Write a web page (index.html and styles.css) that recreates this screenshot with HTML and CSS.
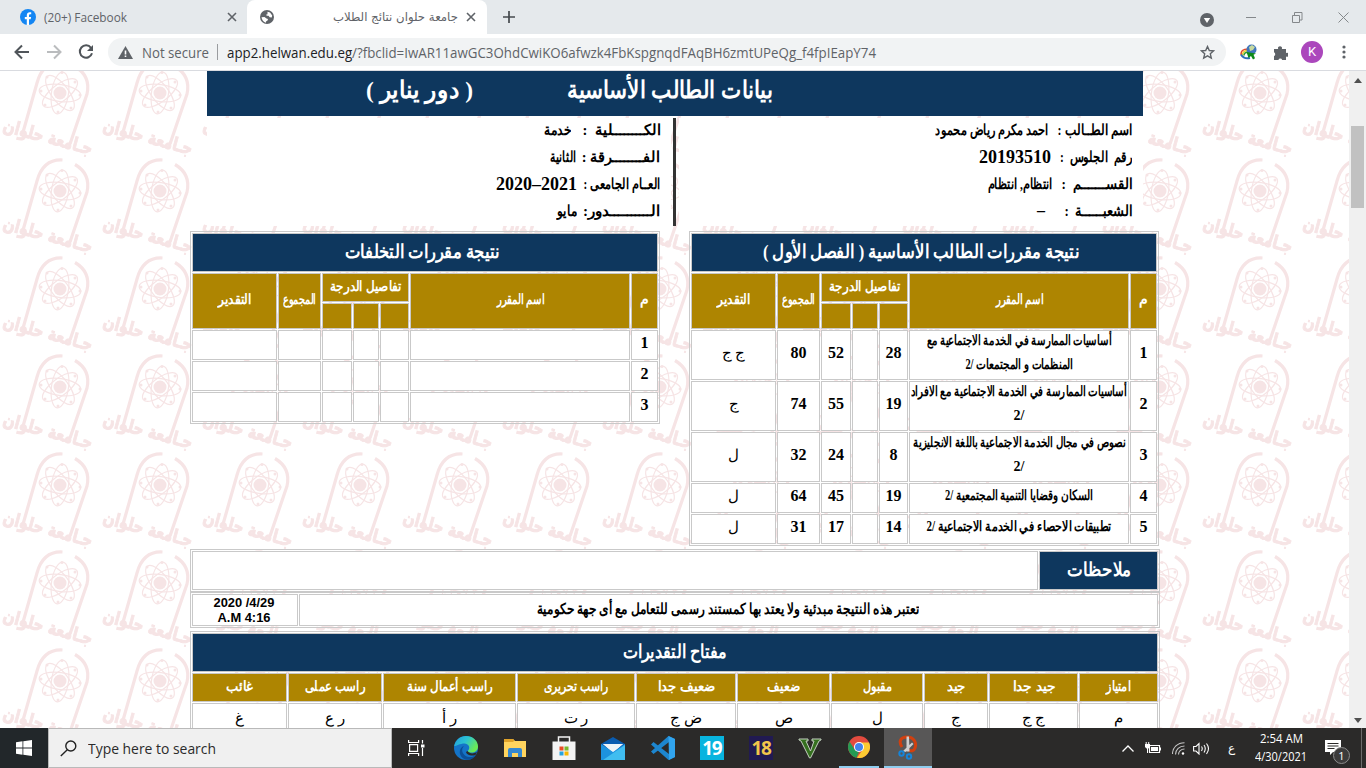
FILE: index.html
```html
<!DOCTYPE html>
<html lang="en">
<head>
<meta charset="utf-8">
<title>جامعة حلوان نتائج الطلاب</title>
<link rel="stylesheet" href="styles.css">
</head>
<body>
<header class="tabs">
  <div class="tab tab-idle">
    <svg width="16" height="16" viewBox="0 0 16 16"><circle cx="8" cy="8" r="8" fill="#1486f3"/><path d="M6.8 16V10.300H4.800V8H6.800V6.300C6.800 4.200 8 3.200 9.700 3.200c.7 0 1.300.1 1.500.1v1.900h-1C9.200 5.200 9 5.800 9 6.500V8h2.100l-.4 2.300H9V16z" fill="#fff"/></svg>
    <span class="fit" data-w="83"><span>(20+) Facebook</span></span>
    <svg class="tab-x" width="10" height="10" viewBox="0 0 10 10"><path d="M1 1l8 8M9 1L1 9" stroke="#5f6368" stroke-width="1.600"/></svg>
  </div>
  <div class="tab tab-live">
    <svg width="14" height="14" viewBox="0 0 14 14"><circle cx="7" cy="7" r="7" fill="#5f6368"/><path d="M1.500 7.200l3-.2 2 1.500 1.500.5-.5 1.500-1.500 1v1.200C3.500 12 1.800 9.800 1.500 7.200zM7.500 1.800l2.500.7 2.200 3-.5 2-2-.3-1.200-1.400H6.800L6 4.800l1.500-.6z" fill="#fff"/></svg>
    <span class="fit tab-name" data-w="125" dir="rtl"><span>جامعة حلوان نتائج الطلاب</span></span>
    <svg width="10" height="10" viewBox="0 0 10 10"><path d="M1 1l8 8M9 1L1 9" stroke="#5f6368" stroke-width="1.600"/></svg>
  </div>
  <svg class="plus" width="12" height="12" viewBox="0 0 12 12"><path d="M6 0v12M0 6h12" stroke="#45494d" stroke-width="1.700"/></svg>
  <div class="window-buttons">
    <svg width="14" height="14" viewBox="0 0 14 14"><circle cx="7" cy="7" r="7" fill="#5f6368"/><path d="M3.800 5h6.400L7 10z" fill="#fff"/></svg>
    <svg width="11" height="11" viewBox="0 0 11 11"><path d="M0 5.500h10" stroke="#84888b"/></svg>
    <svg width="11" height="11" viewBox="0 0 11 11" fill="none" stroke="#84888b"><path d="M.5 3.500h7v7h-7zM2.500 3.500v-3h7.500v7.500H7.500"/></svg>
    <svg width="11" height="11" viewBox="0 0 11 11"><path d="M.5.5l10 10M10.500.5l-10 10" stroke="#84888b"/></svg>
  </div>
</header>
<nav class="toolbar">
  <svg width="16" height="16" viewBox="0 0 16 16" fill="none" stroke="#50555a" stroke-width="2"><path d="M15 8H2M8 1.500L1.500 8 8 14.500"/></svg>
  <svg width="16" height="16" viewBox="0 0 16 16" fill="none" stroke="#babcbe" stroke-width="2"><path d="M1 8h13M8 1.500L14.500 8 8 14.500"/></svg>
  <svg width="16" height="16" viewBox="0 0 16 16"><path d="M13 3.800A6.200 6.200 0 1 0 14 9.300" fill="none" stroke="#50555a" stroke-width="2"/><path d="M15 1v6H9z" fill="#50555a"/></svg>
  <div class="address">
    <svg width="15" height="13" viewBox="0 0 15 13"><path d="M7.500 0L15 13H0z" fill="#5f6368"/><path d="M7.500 4.500v4M7.500 9.600v1.500" stroke="#fff" stroke-width="1.600"/></svg>
    <span class="fit secure" data-w="67"><span>Not secure</span></span>
    <i class="sep"></i>
    <span class="fit url" data-w="649"><span><em>app2.helwan.edu.eg</em>/?fbclid=IwAR11awGC3OhdCwiKO6afwzk4FbKspgnqdFAqBH6zmtUPeQg_f4fpIEapY74</span></span>
    <svg class="star" width="15" height="15" viewBox="0 0 15 15"><path d="M7.500 1.500l1.800 4 4.300.4-3.300 2.900 1 4.300-3.800-2.300-3.800 2.300 1-4.300L1.400 5.900l4.300-.4z" fill="none" stroke="#5f6368" stroke-width="1.400"/></svg>
  </div>
  <svg class="idm" width="17" height="16" viewBox="0 0 17 16"><path d="M1.200 11q-1-6 7-6" fill="none" stroke="#e0472a" stroke-width="1.600"/><path d="M2.600 11.500q-.6-5 6-5" fill="none" stroke="#efd030" stroke-width="1.600"/><path d="M4 11.500q0-3.500 5-3.500" fill="none" stroke="#35a03a" stroke-width="1.600"/><path d="M1 10.500q3 5 9 3.500" fill="none" stroke="#2f6fb8" stroke-width="2"/><circle cx="11.500" cy="5.500" r="5" fill="#3f75bb"/><path d="M9 3l3-2 3 2-2 3-3 1z" fill="#c7d9a0"/><path d="M6.500 8l9.500 1.500-2.500 1.200 1.500 3.500-2 1.300-2-3.500-2.500 2z" fill="#0f8a1a"/></svg>
  <svg class="puzzle" width="15" height="15" viewBox="0 0 15 15"><path d="M1 4h4.200a2 2 0 1 1 3.600 0H13v4a2 2 0 1 1 0 3.400V15H9.200a2 2 0 0 0-3.800 0H1v-4a2 2 0 0 0 0-3.700z" fill="#5f6368"/></svg>
  <span class="avatar">K</span>
  <svg class="menu" width="4" height="14" viewBox="0 0 4 14" fill="#5f6368"><circle cx="2" cy="2" r="1.600"/><circle cx="2" cy="7" r="1.600"/><circle cx="2" cy="12" r="1.600"/></svg>
</nav>
<div class="viewport">
<main class="page">
  <svg class="watermark" width="1349" height="657">
    <defs><pattern id="crest" width="100" height="98" patternUnits="userSpaceOnUse" y="-12">
      <g fill="none" stroke="#f6e4e5">
        <path d="M22.500 75L37 24Q43 2 62.500 3M75 7.500Q91 17 87 35L70 85" stroke-width="3.200"/>
        <g stroke-width="1.200"><ellipse cx="60" cy="34" rx="21" ry="8.500" transform="rotate(8 60 34)"/><ellipse cx="60" cy="34" rx="21" ry="8.500" transform="rotate(53 60 34)"/><ellipse cx="60" cy="34" rx="21" ry="8.500" transform="rotate(98 60 34)"/><ellipse cx="60" cy="34" rx="21" ry="8.500" transform="rotate(143 60 34)"/></g>
      </g>
      <g fill="#f6e4e5"><circle cx="60" cy="34" r="6.500"/><circle cx="47" cy="18" r="1.500"/><circle cx="62" cy="13.500" r="1.500"/><circle cx="75" cy="23" r="1.500"/><circle cx="80" cy="36" r="1.500"/><circle cx="71" cy="49" r="1.500"/><circle cx="58" cy="53" r="1.500"/><circle cx="45" cy="46" r="1.500"/><circle cx="41" cy="32" r="1.500"/>
      <text class="crest-name" transform="translate(2 72) rotate(15)" textLength="92" lengthAdjust="spacingAndGlyphs">جـامعة حلوان</text></g>
    </pattern></defs>
    <rect width="1349" height="657" fill="url(#crest)"/>
  </svg>
  <div class="content" dir="rtl" lang="ar">
    <h1 class="banner"><span class="fit" data-w="206"><span>بيانات الطالب الأساسية</span></span><span class="fit" data-w="107"><span>( دور يناير )</span></span></h1>
    <section class="student">
      <div class="facts facts-main">
        <p><span class="fit" data-w="75"><span>اسم الطــالب :</span></span><span class="fit" data-w="113"><span>احمد مكرم رياض محمود</span></span></p>
        <p><span class="fit" data-w="72"><span>رقم &nbsp;الجلوس &nbsp;:</span></span><b class="num">20193510</b></p>
        <p><span class="fit" data-w="71"><span>القســـــــم &nbsp;:</span></span><span class="fit" data-w="65"><span>انتظام, انتظام</span></span></p>
        <p><span class="fit" data-w="68"><span>الشعبــــــة &nbsp;:</span></span><b class="num dash">–</b></p>
      </div>
      <i class="rule"></i>
      <div class="facts facts-side">
        <p><span class="fit" data-w="78"><span>الكــــــــلية &nbsp;:</span></span><span class="fit gap-l" data-w="27"><span>خدمة</span></span></p>
        <p><span class="fit" data-w="78"><span>الفــــــــرقة :</span></span><span class="fit" data-w="26"><span>الثانية</span></span></p>
        <p><span class="fit" data-w="77"><span>العــام الجامعى :</span></span><b class="num" dir="ltr">2020–2021</b></p>
        <p><span class="fit" data-w="77"><span>الــــــــــدور:</span></span><span class="fit" data-w="20"><span>مايو</span></span></p>
      </div>
    </section>
    <div class="results">
      <section class="grid marks">
        <h2 class="c navy wide"><span class="fit" data-w="316"><span>نتيجة مقررات الطالب الأساسية ( الفصل الأول )</span></span></h2>
        <div class="c gold tall">م</div><div class="c gold tall"><span class="fit" data-w="48"><span>اسم المقرر</span></span></div><div class="c gold three"><span class="fit" data-w="72"><span>تفاصيل الدرجة</span></span></div><div class="c gold tall"><span class="fit" data-w="33"><span>المجموع</span></span></div><div class="c gold tall"><span class="fit" data-w="33"><span>التقدير</span></span></div>
        <div class="c gold"></div><div class="c gold"></div><div class="c gold"></div>
        <div class="c">1</div><div class="c course"><span class="fit" data-w="185"><span>أساسيات الممارسة في الخدمة الاجتماعية مع</span></span><span class="fit" data-w="108"><span>المنظمات و المجتمعات /2</span></span></div><div class="c">28</div><div class="c"></div><div class="c">52</div><div class="c">80</div><div class="c grade">ج ج</div>
        <div class="c">2</div><div class="c course"><span class="fit" data-w="216"><span>أساسيات الممارسة في الخدمة الاجتماعية مع الافراد</span></span><span>/2</span></div><div class="c">19</div><div class="c"></div><div class="c">55</div><div class="c">74</div><div class="c grade">ج</div>
        <div class="c">3</div><div class="c course"><span class="fit" data-w="213"><span>نصوص في مجال الخدمة الاجتماعية باللغة الانجليزية</span></span><span>/2</span></div><div class="c">8</div><div class="c"></div><div class="c">24</div><div class="c">32</div><div class="c grade">ل</div>
        <div class="c">4</div><div class="c course"><span class="fit" data-w="148"><span>السكان وقضايا التنمية المجتمعية /2</span></span></div><div class="c">19</div><div class="c"></div><div class="c">45</div><div class="c">64</div><div class="c grade">ل</div>
        <div class="c">5</div><div class="c course"><span class="fit" data-w="185"><span>تطبيقات الاحصاء في الخدمة الاجتماعية /2</span></span></div><div class="c">14</div><div class="c"></div><div class="c">17</div><div class="c">31</div><div class="c grade">ل</div>
      </section>
      <section class="grid marks marks-late">
        <h2 class="c navy wide"><span class="fit" data-w="155"><span>نتيجة مقررات التخلفات</span></span></h2>
        <div class="c gold tall">م</div><div class="c gold tall"><span class="fit" data-w="48"><span>اسم المقرر</span></span></div><div class="c gold three"><span class="fit" data-w="72"><span>تفاصيل الدرجة</span></span></div><div class="c gold tall"><span class="fit" data-w="33"><span>المجموع</span></span></div><div class="c gold tall"><span class="fit" data-w="33"><span>التقدير</span></span></div>
        <div class="c gold"></div><div class="c gold"></div><div class="c gold"></div>
        <div class="c">1</div><div class="c"></div><div class="c"></div><div class="c"></div><div class="c"></div><div class="c"></div><div class="c"></div>
        <div class="c">2</div><div class="c"></div><div class="c"></div><div class="c"></div><div class="c"></div><div class="c"></div><div class="c"></div>
        <div class="c">3</div><div class="c"></div><div class="c"></div><div class="c"></div><div class="c"></div><div class="c"></div><div class="c"></div>
      </section>
    </div>
    <section class="grid notes"><h2 class="c navy"><span class="fit" data-w="64"><span>ملاحظات</span></span></h2><div class="c"></div></section>
    <section class="grid stamp"><div class="c"><span class="fit" data-w="382"><span>تعتبر هذه النتيجة مبدئية ولا يعتد بها كمستند رسمى للتعامل مع أى جهة حكومية</span></span></div><div class="c date" dir="ltr">2020 /4/29<br>A.M 4:16</div></section>
    <section class="grid key">
      <h2 class="c navy wide"><span class="fit" data-w="104"><span>مفتاح التقديرات</span></span></h2>
      <div class="c gold"><span class="fit" data-w="25"><span>امتياز</span></span></div><div class="c gold"><span class="fit" data-w="43"><span>جيد جدا</span></span></div><div class="c gold"><span class="fit" data-w="19"><span>جيد</span></span></div><div class="c gold"><span class="fit" data-w="29"><span>مقبول</span></span></div><div class="c gold"><span class="fit" data-w="33"><span>ضعيف</span></span></div><div class="c gold"><span class="fit" data-w="58"><span>ضعيف جدا</span></span></div><div class="c gold"><span class="fit" data-w="65"><span>راسب تحريرى</span></span></div><div class="c gold"><span class="fit" data-w="86"><span>راسب أعمال سنة</span></span></div><div class="c gold"><span class="fit" data-w="61"><span>راسب عملى</span></span></div><div class="c gold"><span class="fit" data-w="27"><span>غائب</span></span></div>
      <div class="c grade">م</div><div class="c grade">ج ج</div><div class="c grade">ج</div><div class="c grade">ل</div><div class="c grade">ص</div><div class="c grade">ض ج</div><div class="c grade">ر ت</div><div class="c grade">ر أ</div><div class="c grade">ر ع</div><div class="c grade">غ</div>
    </section>
  </div>
</main>
<aside class="scroll">
  <svg width="8" height="5" viewBox="0 0 8 5"><path d="M0 5l4-5 4 5z" fill="#505050"/></svg>
  <i class="thumb"></i>
  <svg width="8" height="5" viewBox="0 0 8 5"><path d="M0 0l4 5 4-5z" fill="#505050"/></svg>
</aside>
</div>
<footer class="taskbar">
  <div class="start"><svg width="16" height="16" viewBox="0 0 16 16" fill="#fff"><path d="M0 2.200L6.500 1.300V7.600H0zM7.300 1.200L16 0v7.600H7.300zM0 8.400h6.500v6.300L0 13.800zM7.300 8.400H16V16l-8.700-1.200z"/></svg></div>
  <div class="search"><svg width="17" height="17" viewBox="0 0 17 17" fill="none" stroke="#222" stroke-width="1.400"><circle cx="10.800" cy="6" r="5"/><path d="M7.300 9.700L.8 16"/></svg><span class="fit" data-w="128"><span>Type here to search</span></span></div>
  <div class="apps">
    <div><svg width="17" height="16" viewBox="0 0 17 16" fill="none" stroke="#fff" stroke-width="1.200"><path d="M.6 0v2.500h10V0M.6 16v-2.500h10V16M1.600 4.600h8v6.800h-8zM14.500 0v3.500M14.500 8v8"/><path d="M13 4.500h3.500v3H13z" fill="#fff" stroke="none"/></svg></div>
    <div><svg width="24" height="24" viewBox="0 0 24 24"><defs><linearGradient id="edge" x1="0" y1="0" x2="1" y2=".5"><stop offset="0" stop-color="#229bdd"/><stop offset=".5" stop-color="#2cc3d2"/><stop offset="1" stop-color="#6bea55"/></linearGradient></defs><circle cx="12" cy="12" r="12" fill="#1474c8"/><path d="M.2 10C1.500 4 6 0 12 0c7 0 12 5 12 10.500 0 4-3 6-6.500 6-3 0-4.500-1-3-2.500 2-2.500 0-6.500-4-6.500-5 0-9 3-10.300 2.500z" fill="url(#edge)"/><path d="M10 10c-4 4-1 10 5 11 3 .4 5-.5 7-2-4 7-14 6-16-1-1-4 1-7 4-8z" fill="#0b4f98"/><path d="M13.500 15c2 3 6 3 9.500 1l-1.500 3c-4 1.500-9 0-9.500-3z" fill="#2b2a29"/></svg></div>
    <div><svg width="22" height="20" viewBox="0 0 22 20"><path d="M0 1h9l2 2h11v16H0z" fill="#ffd45e"/><path d="M0 1h9l1.500 1.500L9 4H0z" fill="#e0a32a"/><path d="M4 19v-7q0-2 2-2h10q2 0 2 2v7h-4v-4H8v4z" fill="#3588d1"/></svg></div>
    <div><svg width="24" height="24" viewBox="0 0 24 24"><path d="M6.500 7V1h11v6" fill="none" stroke="#f3f3f3" stroke-width="1.500"/><path d="M.5 5.500h23V24H.5z" fill="#f3f3f3"/><path d="M7.500 10.500h4v4h-4z" fill="#e84c23"/><path d="M12.500 10.500h4v4h-4z" fill="#7ab82c"/><path d="M7.500 15.500h4v4h-4z" fill="#28a4df"/><path d="M12.500 15.500h4v4h-4z" fill="#f8b700"/></svg></div>
    <div><svg width="24" height="23" viewBox="0 0 24 23"><path d="M0 7l12-7 12 7v16H0z" fill="#0a5cb0"/><path d="M2 7h20L12 16z" fill="#eef4f8"/><path d="M0 7l12 8L24 7v16H0z" fill="#1d93df"/><path d="M2 7h20l-10 7.500z" fill="#eef4f8"/><path d="M24 8v15H2z" fill="#40bdf0"/></svg></div>
    <div><svg width="24" height="24" viewBox="0 0 24 24"><path d="M17.500 0L24 3v18l-6.500 3L0 8.500 2.500 6 18 18V6L2.500 18 0 15.500z" fill="#1d86cf"/><path d="M17.500 0L24 3v18l-6 3z" fill="#31a4ee"/></svg></div>
    <div><span class="app-num n19">19</span></div>
    <div><span class="app-num n18">18</span></div>
    <div><svg width="24" height="21" viewBox="0 0 24 21"><path d="M1 1h9v2H8l4.500 10L16 3h-2V1h9v1l-2 1-8.500 17h-1L3 3 1 2z" fill="#35701f" stroke="#c5d0c2"/></svg></div>
    <div class="open"><svg width="22" height="22" viewBox="0 0 22 22"><circle cx="11" cy="11" r="11" fill="#e34b3f"/><path d="M1.500 5.500L7 14l4 2-2.500 5.700A11 11 0 0 1 1.500 5.500z" fill="#249b54"/><path d="M11 6.500h10a11 11 0 0 1-12 15.300L14.500 14z" fill="#fbca32"/><circle cx="11" cy="11" r="5" fill="#fff"/><circle cx="11" cy="11" r="4" fill="#4384ee"/></svg></div>
    <div class="open current"><svg width="20" height="25" viewBox="0 0 20 25"><path d="M4 12C0 6 3 2 9 2c7 0 10 6 8 11-1 3-4 3.500-6 2" fill="none" stroke="#d1400f" stroke-width="3"/><path d="M8.500 1.500h2.500l.5 15h-3zM5 16l9-8.500 1.500 1.500L7.500 17z" fill="#cfcfcf"/><circle cx="3.500" cy="18.500" r="2.200" fill="none" stroke="#1684d8" stroke-width="2"/><circle cx="11" cy="21.500" r="2.200" fill="none" stroke="#1684d8" stroke-width="2"/></svg></div>
  </div>
  <div class="tray">
    <svg width="12" height="7" viewBox="0 0 12 7"><path d="M.5 6.500L6 1l5.500 5.500" fill="none" stroke="#fff" stroke-width="1.300"/></svg>
    <svg width="16" height="12" viewBox="0 0 16 12"><path d="M4.500 3.500h10v7h-10z" fill="none" stroke="#fff" stroke-width="1.200"/><path d="M6 5h7v4H6zM15 5.500h1v3h-1zM0 2h5v3L3.500 6.500h-2L0 5zM.7 0h1v2h-1zM3.200 0h1v2h-1zM2 6h1v5H2z" fill="#fff"/></svg>
    <svg width="13" height="13" viewBox="0 0 13 13" fill="none" stroke="#c7c7c7" stroke-width="1.100"><path d="M.5 12C.5 5.500 5.500.7 12.500.7M3.500 12.500c0-5 4-8.500 9-8.500M6.500 12.500c0-3 2.500-5.500 6-5.500"/><circle cx="11" cy="11.500" r="1.200" fill="#fff" stroke="none"/></svg>
    <svg width="17" height="13" viewBox="0 0 17 13" fill="none" stroke="#fff" stroke-width="1.100"><path d="M.6 4.500H3L6 1.500v10.500L3 9H.6zM8.500 4.500q1.500 2 0 4.500M11 3q2.500 3.500 0 7.500M13.500 1.500q4 5 0 10.500"/></svg>
    <span class="lang">ع</span>
    <div class="clock"><span class="fit" data-w="43"><span>2:54 AM</span></span><span class="fit" data-w="52"><span>4/30/2021</span></span></div>
    <div class="action"><svg width="16" height="15" viewBox="0 0 16 15"><path d="M0 0h16v12H8l-3 3v-3H0z" fill="#fff"/><path d="M2.500 3.500h11M2.500 6h11M2.500 8.500h7" stroke="#2b2a29"/></svg><span class="count">1</span></div>
    <i class="peek"></i>
  </div>
</footer>
<script src="fit.js"></script>
</body>
</html>
```
FILE: styles.css
```css
* { box-sizing: border-box; }
body { margin: 0; width: 1366px; height: 768px; overflow: hidden; display: flex; flex-direction: column; font-family: "Open Sans", "DejaVu Sans", sans-serif; font-size: 12px; }
svg { flex: none; display: block; }
.fit { display: block; flex: none; white-space: nowrap; }
.fit > span { display: inline-block; transform-origin: 0 50%; }
[dir="rtl"] .fit > span, .fit[dir="rtl"] > span { transform-origin: 100% 50%; }

.tabs { height: 34px; flex: none; background: #e5e9ec; display: flex; align-items: center; color: #5f6368; }
.tab { height: 34px; display: flex; align-items: center; }
.tab-idle { width: 247px; padding: 0 10px 0 20px; gap: 8px; }
.tab-x { margin-left: auto; }
.tab-live { width: 240px; background: #fff; border-radius: 8px 8px 0 0; padding: 0 11px 0 13px; }
.tab-name { margin: 0 8px 0 auto; font-family: "DejaVu Sans", sans-serif; }
.plus { margin-left: 16px; }
.window-buttons { margin-left: auto; display: flex; align-items: center; padding-right: 17px; gap: 35px; height: 28px; }
.window-buttons svg:first-child { margin-right: -3px; margin-top: 5px; }

.toolbar { height: 37px; flex: none; background: #fff; border-bottom: 1px solid #d9dbe0; display: flex; align-items: center; padding: 0 16px 0 14px; gap: 16px; }
.address { width: 1118px; height: 28px; border-radius: 14px; background: #f1f3f4; display: flex; align-items: center; padding-left: 10px; margin-left: -2px; font-size: 14px; color: #5f6368; }
.secure { margin: 0 8px 0 9px; }
.sep { width: 1px; height: 16px; background: #9a9c9f; margin-right: 9px; }
.url em { font-style: normal; color: #202124; }
.star { margin-left: auto; margin-right: 11px; }
.idm { margin-left: -2px; }
.avatar { width: 22px; height: 22px; border-radius: 50%; background: #ab47bc; color: #fff; font: 13px/22px Roboto, sans-serif; text-align: center; margin-left: -3px; }
.menu { margin-left: 3px; }

.viewport { height: 657px; flex: none; display: flex; overflow: hidden; background: #fff; }
.page { width: 1349px; position: relative; overflow: hidden; }
.watermark { position: absolute; left: 0; top: 0; }
.crest-name { font: bold 18px "DejaVu Sans", sans-serif; direction: ltr; stroke: #f6e4e5; stroke-width: 1px; }
.content { position: relative; width: 970px; margin-left: 190px; font-family: "Liberation Serif", "Times New Roman", serif; font-weight: bold; font-size: 16px; color: #000; }
.banner { margin: 0 17px; height: 45px; padding-right: 370px; background: #0e375e; color: #fff; display: flex; align-items: center; gap: 94px; font-size: 24px; line-height: 38px; padding-bottom: 7px; }
.student { display: flex; margin: 2px 17px 0; height: 108px; }
.facts { background: #fff; width: 464px; padding-right: 11px; }
.facts p { margin: 0; height: 27px; display: flex; align-items: center; gap: 9px; font-size: 15px; line-height: 24px; padding-bottom: 3px; }
.facts-side p { gap: 6px; }
.facts-side .gap-l { margin-right: 5px; }
.rule { width: 3px; margin: 0 3px 0 2px; background: #333; }
.num { font-size: 18px; }
.dash { font-size: 16px; margin-right: 10px; }

.grid { display: grid; gap: 1px; padding: 1px; border: 1px solid #c9c9c9; }
.c { background: #fff; border: 1px solid #c9c9c9; display: flex; align-items: center; justify-content: center; min-width: 0; min-height: 0; margin: 0; line-height: 20px; }
.navy { background: #0e375e; color: #fff; font-size: 19px; padding-bottom: 2px; }
.gold { background: #ae8501; color: #fff; font-size: 14px; padding-bottom: 2px; }
.wide { grid-column: 1 / -1; }
.tall { grid-row: span 2; }
.three { grid-column: span 3; }
.results { display: flex; gap: 29px; margin: 5px 1px 0 0; align-items: flex-start; height: 318px; }
.marks { width: 470px; grid-template-columns: 27px 220px 29px 26px 30px 43px 85px; grid-template-rows: 39px 29px 26px 50px 50px 50px 30px 30px; }
.marks-late { grid-template-rows: 39px 29px 26px 30px 30px 30px; }
.marks .navy { padding-right: 6px; }
.marks .c:not(.gold):not(.navy) { padding-bottom: 4px; }
.course { flex-direction: column; font-size: 14px; line-height: 24px; }
.grade { font-size: 15px; font-weight: normal; }
.marks .c.grade { padding-bottom: 0; }
.notes { grid-template-columns: 119px 846px; height: 43px; }
.stamp { grid-template-columns: 859px 106px; height: 36px; font-size: 15px; }
.stamp .c { padding: 0 2px 3px 0; }
.stamp .date { font: bold 12.9px/15px "Liberation Sans", Arial, sans-serif; text-align: center; padding-bottom: 0; }
.key { margin-top: 3px; grid-template-columns: 79px 89px 64px 92px 93px 100px 118px 133px 94px 95px; grid-template-rows: 39px 29px 29px; }

.scroll { width: 17px; background: #f0f0f0; display: flex; flex-direction: column; align-items: center; padding: 7px 0 5px; }
.thumb { width: 13px; height: 82px; margin: 43px 0 auto; background: #c1c1c1; }

.taskbar { height: 40px; flex: none; background: #2b2a29; display: flex; color: #fff; }
.start { width: 48px; background: #22272a; display: flex; align-items: center; justify-content: center; }
.search { width: 344px; background: #f0f0f0; border: 1px solid #b9b9b9; color: #2b2b2b; display: flex; align-items: center; gap: 11px; padding-left: 11px; font-size: 15px; }
.apps { display: flex; }
.apps > div { width: 49.2px; display: flex; align-items: center; justify-content: center; }
.app-num { width: 24px; height: 24px; font: bold 19px/24px "Open Sans", sans-serif; text-align: center; letter-spacing: -1.500px; }
.n19 { background: #08b4df; }
.n18 { background: #211a52; color: #f1c64b; }
.apps > .open { border-bottom: 2px solid #8fcdef; width: 40px; margin: 0 5px 0 4px; }
.apps > .current { background: #585757; width: 48px; margin: 0; }
.tray { margin-left: auto; display: flex; align-items: center; }
.tray > svg { margin-right: 14px; }
.tray > svg:nth-child(3) { margin-right: 8px; }
.tray > svg:nth-child(1), .tray > svg:nth-child(2) { margin-right: 11px; }
.lang { width: 12px; margin: 0 14px 0 4px; font: 12px "DejaVu Sans", sans-serif; }
.clock { width: 54px; display: flex; flex-direction: column; align-items: center; font-size: 12px; line-height: 18px; }
.action { position: relative; margin: 0 20px 0 17px; padding-bottom: 2px; }
.count { position: absolute; left: 8px; top: 7px; width: 17px; height: 17px; border-radius: 50%; border: 1px solid #8c8c8c; background: #3c3b3b; font: 11px/15px "Open Sans", sans-serif; text-align: center; }
.peek { width: 1px; height: 40px; margin-right: 4px; background: #6b6b6b; }
```
FILE: fit.js
```js
// Condense or stretch each label to its column width.
document.querySelectorAll('.fit').forEach(function (box) {
  var label = box.firstElementChild;
  var natural = label.getBoundingClientRect().width;
  var target = Number(box.dataset.w);
  box.style.width = target + 'px';
  label.style.transform = 'scaleX(' + target / natural + ')';
});
```
